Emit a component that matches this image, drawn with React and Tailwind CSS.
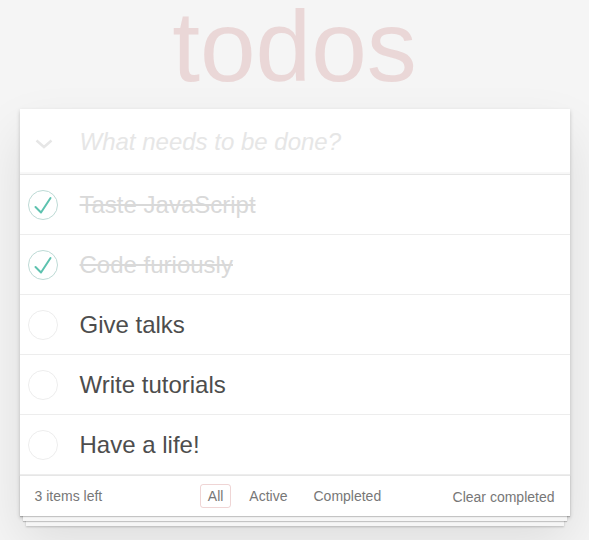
const todos = [
  { id: 1, title: "Taste JavaScript", done: true },
  { id: 2, title: "Code furiously", done: true },
  { id: 3, title: "Give talks", done: false },
  { id: 4, title: "Write tutorials", done: false },
  { id: 5, title: "Have a life!", done: false },
];

function Check({ done }) {
  return (
    <svg width="30" height="30" viewBox="0 0 30 30" className="shrink-0">
      <circle cx="15" cy="15" r="14.5" fill="none" stroke={done ? "#bddad5" : "#ededed"} strokeWidth="1" />
      {done && (
        <path d="M7.5 17 L13 22.5 L22.5 8" fill="none" stroke="#5dc2af" strokeWidth="2" strokeLinecap="round" strokeLinejoin="round" />
      )}
    </svg>
  );
}

function TodoItem({ todo }) {
  return (
    <li className="relative flex items-center border-b border-[#ededed]">
      <div className="absolute left-[8px] top-1/2 -translate-y-1/2">
        <Check done={todo.done} />
      </div>
      <label
        className={
          "block w-full py-[15px] pl-[60px] pr-[15px] text-[24px] leading-[29px] " +
          (todo.done ? "text-[#d9d9d9] line-through" : "text-[#4d4d4d]")
        }
      >
        {todo.title}
      </label>
    </li>
  );
}

export default function App() {
  const left = todos.filter((t) => !t.done).length;
  return (
    <div className="min-h-screen bg-[#f5f5f5] pt-[6px] font-['Liberation_Sans',Arial,sans-serif] text-[14px] text-[#4d4d4d]">
      <h1 className="text-center text-[100px] leading-[80px] font-thin text-[rgba(175,47,47,0.15)]">todos</h1>

      <section className="relative mx-auto mt-[23px] w-[550px] bg-white shadow-[0_2px_4px_0_rgba(0,0,0,0.2),0_25px_50px_0_rgba(0,0,0,0.1)]">
        <header className="relative flex h-[65px] items-center shadow-[inset_0_-2px_1px_rgba(0,0,0,0.03)]">
          <div className="absolute left-[15px] top-[30px]">
            <svg width="18" height="10" viewBox="0 0 18 10">
              <path d="M1.5 1.5 L9 8 L16.5 1.5" fill="none" stroke="#e6e6e6" strokeWidth="2.5" />
            </svg>
          </div>
          <div className="pl-[60px] text-[24px] italic text-[#e6e6e6]">What needs to be done?</div>
        </header>

        <ul className="border-t border-[#e6e6e6]">
          {todos.map((t) => (
            <TodoItem key={t.id} todo={t} />
          ))}
        </ul>

        <footer className="grid h-[41px] grid-cols-[1fr_auto_1fr] items-center border-t border-[#e6e6e6] px-[15px] text-[14px] text-[#777] shadow-[0_1px_1px_rgba(0,0,0,0.2),0_8px_0_-3px_#f6f6f6,0_9px_1px_-3px_rgba(0,0,0,0.2),0_16px_0_-6px_#f6f6f6,0_17px_2px_-6px_rgba(0,0,0,0.2)]">
          <span className="justify-self-start">{left} items left</span>
          <ul className="flex items-center gap-[10px]">
            <li className="rounded-[3px] border border-[rgba(175,47,47,0.2)] px-[7px] py-[3px] leading-[16px]">All</li>
            <li className="rounded-[3px] border border-transparent px-[7px] py-[3px] leading-[16px]">Active</li>
            <li className="rounded-[3px] border border-transparent px-[7px] py-[3px] leading-[16px]">Completed</li>
          </ul>
          <span className="justify-self-end pt-[2px]">Clear completed</span>
        </footer>
      </section>
    </div>
  );
}
